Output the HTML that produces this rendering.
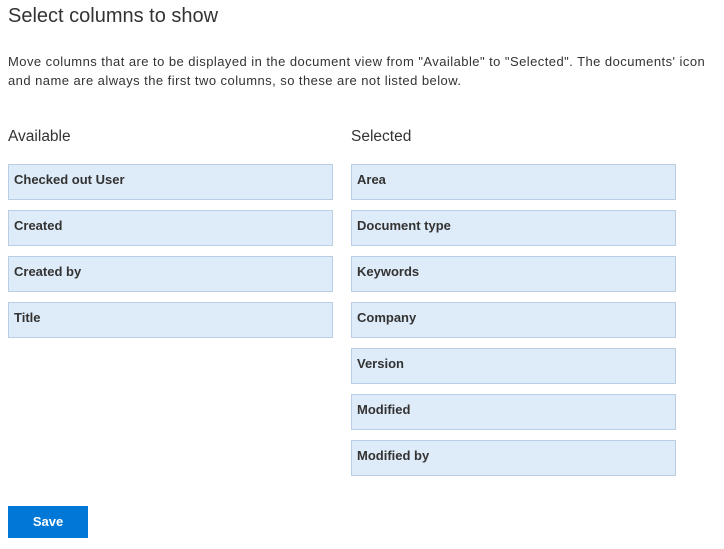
<html><head><style>
body{margin:0;background:#fff;font-family:"Liberation Sans",sans-serif;color:#333;width:724px;height:549px;overflow:hidden;position:relative}
.a{position:absolute;white-space:nowrap}
h1{position:absolute;left:8px;top:5px;margin:0;font-weight:normal;font-size:20px;color:#333}
.p{left:8px;top:52px;font-size:13px;line-height:19px;color:#333;letter-spacing:0.45px}
.h{font-size:15.5px;top:128px;color:#333}
.b{position:absolute;width:323px;height:34px;background:#deebf8;border:1px solid #b9cde3;font-size:13px;font-weight:bold;color:#333;box-sizing:content-box}
.b span{position:absolute;left:5px;top:7px}
.s{position:absolute;left:8px;top:506px;width:80px;height:32px;background:#0078d7;color:#fff;font-weight:bold;font-size:13px;text-align:center;line-height:32px}
</style></head><body>
<h1>Select columns to show</h1>
<div class="a p">Move columns that are to be displayed in the document view from "Available" to "Selected". The documents' icon<br>and name are always the first two columns, so these are not listed below.</div>
<div class="a h" style="left:8px">Available</div>
<div class="a h" style="left:351px">Selected</div>
<div class="b" style="left:8px;top:164px"><span>Checked out User</span></div>
<div class="b" style="left:8px;top:210px"><span>Created</span></div>
<div class="b" style="left:8px;top:256px"><span>Created by</span></div>
<div class="b" style="left:8px;top:302px"><span>Title</span></div>
<div class="b" style="left:351px;top:164px"><span>Area</span></div>
<div class="b" style="left:351px;top:210px"><span>Document type</span></div>
<div class="b" style="left:351px;top:256px"><span>Keywords</span></div>
<div class="b" style="left:351px;top:302px"><span>Company</span></div>
<div class="b" style="left:351px;top:348px"><span>Version</span></div>
<div class="b" style="left:351px;top:394px"><span>Modified</span></div>
<div class="b" style="left:351px;top:440px"><span>Modified by</span></div>
<div class="s">Save</div>
</body></html>
